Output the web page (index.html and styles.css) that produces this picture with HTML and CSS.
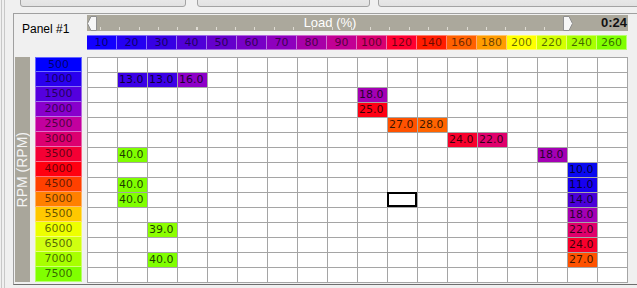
FILE: index.html
```html
<!DOCTYPE html>
<html>
<head>
<meta charset="utf-8">
<link rel="stylesheet" href="styles.css">
</head>
<body>
<div class="win"><div class="win-in">
  <div class="btnbar"><div class="btn b1"></div><div class="btn b2"></div><div class="btn b3"></div></div>
  <div class="panel">
    <div class="top">
      <div class="plabel">Panel #1</div>
      <div class="cols">
        <div class="slider">
          <div class="track">
            <svg class="thumb tl" width="10" height="15" viewBox="0 0 10 15"><path d="M9.5 0.5 H4 L0.5 7.5 L4 14.5 H9.5 Z" fill="#f6f6f6" stroke="#8f8f8f"/></svg>
            <span class="load">Load (%)</span>
            <svg class="thumb tr" width="10" height="15" viewBox="0 0 10 15"><path d="M0.5 0.5 H6 L9.5 7.5 L6 14.5 H0.5 Z" fill="#f6f6f6" stroke="#8f8f8f"/></svg>
          </div>
          <div class="time">0:24</div>
        </div>
        <div class="colheads">
          <div class="ch k1">10</div><div class="ch k2">20</div><div class="ch k3">30</div><div class="ch k4">40</div><div class="ch k5">50</div><div class="ch k6">60</div><div class="ch k7">70</div><div class="ch k8">80</div><div class="ch k9">90</div><div class="ch k10">100</div><div class="ch k11">120</div><div class="ch k12">140</div><div class="ch k13">160</div><div class="ch k14">180</div><div class="ch k15">200</div><div class="ch k16">220</div><div class="ch k17">240</div><div class="ch k18">260</div>
        </div>
      </div>
    </div>
    <div class="body">
      <div class="axis"><span>RPM (RPM)</span></div>
      <div class="rowheads">
        <div class="rh r1">500</div><div class="rh r2">1000</div><div class="rh r3">1500</div><div class="rh r4">2000</div><div class="rh r5">2500</div><div class="rh r6">3000</div><div class="rh r7">3500</div><div class="rh r8">4000</div><div class="rh r9">4500</div><div class="rh r10">5000</div><div class="rh r11">5500</div><div class="rh r12">6000</div><div class="rh r13">6500</div><div class="rh r14">7000</div><div class="rh r15">7500</div>
      </div>
      <div class="grid">
        <i></i><i></i><i></i><i></i><i></i><i></i><i></i><i></i><i></i><i></i><i></i><i></i><i></i><i></i><i></i><i></i><i></i><i></i>
        <i></i><i class="v13">13.0</i><i class="v13">13.0</i><i class="v16">16.0</i><i></i><i></i><i></i><i></i><i></i><i></i><i></i><i></i><i></i><i></i><i></i><i></i><i></i><i></i>
        <i></i><i></i><i></i><i></i><i></i><i></i><i></i><i></i><i></i><i class="v18">18.0</i><i></i><i></i><i></i><i></i><i></i><i></i><i></i><i></i>
        <i></i><i></i><i></i><i></i><i></i><i></i><i></i><i></i><i></i><i class="v25">25.0</i><i></i><i></i><i></i><i></i><i></i><i></i><i></i><i></i>
        <i></i><i></i><i></i><i></i><i></i><i></i><i></i><i></i><i></i><i></i><i class="v27">27.0</i><i class="v28">28.0</i><i></i><i></i><i></i><i></i><i></i><i></i>
        <i></i><i></i><i></i><i></i><i></i><i></i><i></i><i></i><i></i><i></i><i></i><i></i><i class="v24">24.0</i><i class="v22">22.0</i><i></i><i></i><i></i><i></i>
        <i></i><i class="v40">40.0</i><i></i><i></i><i></i><i></i><i></i><i></i><i></i><i></i><i></i><i></i><i></i><i></i><i></i><i class="v18">18.0</i><i></i><i></i>
        <i></i><i></i><i></i><i></i><i></i><i></i><i></i><i></i><i></i><i></i><i></i><i></i><i></i><i></i><i></i><i></i><i class="v10">10.0</i><i></i>
        <i></i><i class="v40">40.0</i><i></i><i></i><i></i><i></i><i></i><i></i><i></i><i></i><i></i><i></i><i></i><i></i><i></i><i></i><i class="v11">11.0</i><i></i>
        <i></i><i class="v40">40.0</i><i></i><i></i><i></i><i></i><i></i><i></i><i></i><i></i><i class="sel"></i><i></i><i></i><i></i><i></i><i></i><i class="v14">14.0</i><i></i>
        <i></i><i></i><i></i><i></i><i></i><i></i><i></i><i></i><i></i><i></i><i></i><i></i><i></i><i></i><i></i><i></i><i class="v18">18.0</i><i></i>
        <i></i><i></i><i class="v39">39.0</i><i></i><i></i><i></i><i></i><i></i><i></i><i></i><i></i><i></i><i></i><i></i><i></i><i></i><i class="v22">22.0</i><i></i>
        <i></i><i></i><i></i><i></i><i></i><i></i><i></i><i></i><i></i><i></i><i></i><i></i><i></i><i></i><i></i><i></i><i class="v24">24.0</i><i></i>
        <i></i><i></i><i class="v40">40.0</i><i></i><i></i><i></i><i></i><i></i><i></i><i></i><i></i><i></i><i></i><i></i><i></i><i></i><i class="v27">27.0</i><i></i>
        <i></i><i></i><i></i><i></i><i></i><i></i><i></i><i></i><i></i><i></i><i></i><i></i><i></i><i></i><i></i><i></i><i></i><i></i>
      </div>
    </div>
  </div>
</div></div>
</body>
</html>
```
FILE: styles.css
```css
* { box-sizing: border-box; }
html, body { margin: 0; }
body {
  width: 637px;
  height: 288px;
  overflow: hidden;
  background: #f0f0f0;
  font-family: "Liberation Sans", Arial, sans-serif;
}
.win {
  height: 288px;
  margin-left: 1px;
  border-left: 1px solid #c8c8c8;
  padding-left: 2px;
}
.win-in {
  height: 100%;
  border-left: 1px solid #c8c8c8;
  padding-left: 8px;
}
.btnbar {
  display: flex;
  height: 13px;
  padding-left: 7px;
}
.btn {
  flex: none;
  height: 22px;
  margin-top: -15px;
  border: 1px solid #a3a3a3;
  border-radius: 3px;
  background: linear-gradient(#f4f4f4, #e2e2e2);
}
.b1 { width: 166px; }
.b2 { width: 173px; margin-left: 11px; }
.b3 { width: 280px; margin-left: 8px; }

.panel {
  height: 272px;
  border-top: 1px solid #a0a0a0;
  border-left: 1px solid #a0a0a0;
  border-bottom: 1px solid #6e6e6e;
}
.top {
  display: flex;
  height: 43px;
}
.plabel {
  width: 73px;
  padding: 8px 0 0 8px;
  font-size: 12px;
  line-height: 14px;
  color: #000;
}
.cols {
  width: 541px;
  display: flex;
  flex-direction: column;
}
.slider {
  display: flex;
  height: 16px;
  margin-top: 1px;
  background: #aba89c;
}
.track {
  position: relative;
  width: 486px;
  display: flex;
  align-items: center;
  justify-content: center;
  background-image: repeating-linear-gradient(to right, #dedbd2 0, #dedbd2 1px, transparent 1px, transparent 19.3px);
  background-size: 465px 3px;
  background-position: 13px calc(100% - 1px);
  background-repeat: no-repeat;
}
.load {
  color: #fff;
  font-size: 13px;
  line-height: 16px;
}
.thumb {
  position: absolute;
  top: 1px;
  display: block;
}
.tl { left: 0; }
.tr { right: 0; }
.time {
  flex: 1;
  text-align: right;
  padding-right: 1px;
  font-weight: bold;
  font-size: 13px;
  line-height: 16px;
  color: #111;
}
.colheads {
  display: flex;
  height: 15px;
  margin-top: 4px;
}
.ch {
  width: 30px;
  height: 15px;
  border-top: 1px solid rgba(255, 255, 255, 0.4);
  border-bottom: 1px solid rgba(255, 255, 255, 0.4);
  border-right: 1px solid rgba(255, 255, 255, 0.45);
  text-align: center;
  font-family: "DejaVu Sans", Verdana, sans-serif;
  font-size: 11px;
  line-height: 13px;
  color: rgba(0, 0, 0, 0.6);
}
.k1 { background: #1200ff; }
.k2 { background: #2400f2; }
.k3 { background: #3600e4; }
.k4 { background: #5000d8; }
.k5 { background: #6400cc; }
.k6 { background: #7800c6; }
.k7 { background: #8e00be; }
.k8 { background: #a800a8; }
.k9 { background: #c20094; }
.k10 { background: #d80070; }
.k11 { background: #ff0030; }
.k12 { background: #ff1c00; }
.k13 { background: #ff6000; }
.k14 { background: #ff9c00; }
.k15 { background: #ffff00; }
.k16 { background: #d4ff00; }
.k17 { background: #a8ff00; }
.k18 { background: #80ff00; }

.body {
  display: flex;
  height: 226px;
}
.axis {
  margin-left: 1px;
  width: 15px;
  height: 225px;
  background: #a9a69b;
  display: flex;
  align-items: center;
  justify-content: center;
}
.axis span {
  writing-mode: vertical-rl;
  transform: rotate(180deg);
  font-size: 14px;
  line-height: 15px;
  color: #f3f3f3;
  white-space: nowrap;
}
.rowheads {
  margin-left: 5px;
  width: 47px;
  height: 225px;
  display: flex;
  flex-direction: column;
}
.rh {
  height: 15px;
  border-left: 1px solid rgba(255, 255, 255, 0.4);
  border-right: 1px solid rgba(255, 255, 255, 0.4);
  border-bottom: 1px solid rgba(255, 255, 255, 0.45);
  text-align: center;
  font-family: "DejaVu Sans", Verdana, sans-serif;
  font-size: 11px;
  line-height: 14px;
  color: rgba(0, 0, 0, 0.6);
}
.rh:first-child { border-top: 1px solid rgba(255, 255, 255, 0.4); line-height: 13px; }
.r1 { background: #0000ff; }
.r2 { background: #2a00ee; }
.r3 { background: #5400de; }
.r4 { background: #8800cc; }
.r5 { background: #c2009e; }
.r6 { background: #dc0070; }
.r7 { background: #f40034; }
.r8 { background: #ff0010; }
.r9 { background: #ff4000; }
.r10 { background: #ff8000; }
.r11 { background: #ffc800; }
.r12 { background: #eeff00; }
.r13 { background: #d0ff10; }
.r14 { background: #a8ff00; }
.r15 { background: #80ff00; }

.grid {
  margin-left: 5px;
  width: 541px;
  height: 226px;
  display: grid;
  grid-template-columns: repeat(18, 30px);
  grid-auto-rows: 15px;
  border-left: 1px solid #a5a5a5;
  border-top: 1px solid #a5a5a5;
  background: #fff;
}
.grid i {
  position: relative;
  font-style: normal;
  border-right: 1px solid #a5a5a5;
  border-bottom: 1px solid #a5a5a5;
  padding-left: 1px;
  font-family: "DejaVu Sans", Verdana, sans-serif;
  font-size: 11px;
  line-height: 14px;
  color: rgba(0, 0, 0, 0.78);
  white-space: nowrap;
}
.grid i.sel::after {
  content: "";
  position: absolute;
  top: -1px;
  left: -1px;
  right: 0;
  bottom: 0;
  border: 2px solid #000;
}
.v10 { background: #0a0af0; }
.v11 { background: #1800f0; }
.v13 { background: #3c00e6; }
.v14 { background: #4c00d8; }
.v16 { background: #8e00c8; }
.v18 { background: #a400b4; }
.v22 { background: #e0006c; }
.v24 { background: #f8002c; }
.v25 { background: #ff0014; }
.v27 { background: #ff5200; }
.v28 { background: #ff6400; }
.v39 { background: #8cff00; }
.v40 { background: #80ff00; }
```
